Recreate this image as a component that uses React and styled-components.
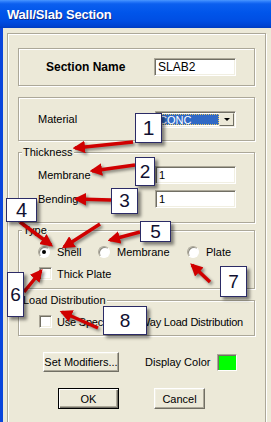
import React from "react";
import styled, { createGlobalStyle } from "styled-components";

const GlobalStyle = createGlobalStyle`
  *, *::before, *::after { box-sizing: border-box; }
  html, body { margin: 0; padding: 0; background: #ECE9D8; }
  body {
    font-family: "Liberation Sans", Arial, sans-serif;
    font-size: 11px;
    color: #000;
  }
`;

const Window = styled.div`
  position: relative;
  width: 271px;
  height: 422px;
  overflow: hidden;
  display: flex;
  flex-direction: column;
  background: #ECE9D8;
`;

const TitleBar = styled.div`
  flex: none;
  height: 28px;
  display: flex;
  align-items: center;
  padding: 1px 0 0 7px;
  color: #fff;
  font-weight: bold;
  font-size: 13px;
  letter-spacing: -0.2px;
  text-shadow: 1px 1px 0 #0b2a8e;
  background: linear-gradient(
    to bottom,
    #4a97ff 0%,
    #2a7bfa 6%,
    #0b5fef 14%,
    #0055ea 45%,
    #004ee3 75%,
    #0044d2 92%,
    #003cc0 100%
  );
`;

const Body = styled.div`
  flex: 1;
  border-left: 3px solid #0a45dc;
  padding: 5px 5px 0 4px;
`;

const etched = `
  border: 1px solid #aca899;
  box-shadow: inset 1px 1px 0 #fff, 1px 1px 0 #fff;
`;

const OuterFrame = styled.div`
  ${etched}
  height: 400px;
  padding: 14px 10px 0 10px;
  display: flex;
  flex-direction: column;
`;

const Panel = styled.div`
  ${etched}
  height: ${(p) => p.$h}px;
  margin-top: ${(p) => p.$mt || 0}px;
  display: flex;
  align-items: center;
`;

const GroupBox = styled.div`
  ${etched}
  height: ${(p) => p.$h}px;
  margin-top: ${(p) => p.$mt}px;
  display: flex;
  flex-direction: column;
`;

const Legend = styled.div`
  align-self: flex-start;
  margin: -7px 0 0 3px;
  padding: 0 1px;
  height: 13px;
  line-height: 13px;
  background: #ECE9D8;
`;

const Row = styled.div`
  display: flex;
  align-items: center;
  height: ${(p) => p.$h || 18}px;
  padding-left: ${(p) => p.$indent}px;
  margin-top: ${(p) => p.$mt || 0}px;
`;

const Label = styled.span`
  flex: none;
  width: ${(p) => p.$w}px;
  font-weight: ${(p) => (p.$bold ? "bold" : "normal")};
  font-size: ${(p) => (p.$bold ? 12 : 11)}px;
  white-space: nowrap;
`;

const sunken = `
  border-style: solid;
  border-width: 1px;
  border-color: #aca899 #fff #fff #aca899;
  box-shadow: inset 1px 1px 0 #716f64, inset -1px -1px 0 #f1efe2;
`;

const TextBox = styled.div`
  ${sunken}
  width: ${(p) => p.$w}px;
  height: 18px;
  background: #fff;
  padding: 0 3px;
  line-height: 16px;
  font-size: ${(p) => p.$fs || 11}px;
`;

const Select = styled.div`
  ${sunken}
  width: 81px;
  height: 17px;
  background: #fff;
  display: flex;
  padding: 2px;
`;

const SelectValue = styled.div`
  flex: 1;
  background: #316ac5;
  color: #fff;
  outline: 1px dotted #e8c860;
  outline-offset: -1px;
  line-height: 13px;
  padding-left: 1px;
`;

const DropButton = styled.div`
  width: 15px;
  margin: -1px -1px -1px 0;
  background: #ECE9D8;
  border-style: solid;
  border-width: 1px;
  border-color: #f1efe2 #716f64 #716f64 #f1efe2;
  display: flex;
  align-items: center;
  justify-content: center;
  &::after {
    content: "";
    border-left: 3px solid transparent;
    border-right: 3px solid transparent;
    border-top: 3px solid #000;
  }
`;

const Option = styled.label`
  display: flex;
  align-items: center;
  width: ${(p) => p.$w}px;
  gap: ${(p) => p.$gap || 7}px;
  white-space: nowrap;
  letter-spacing: ${(p) => p.$ls || 0}px;
`;

const Radio = styled.span`
  flex: none;
  width: 12px;
  height: 12px;
  border-radius: 50%;
  background: #fff;
  border: 1px solid;
  border-color: #aca899 #fff #fff #aca899;
  box-shadow: inset 1px 1px 0 #8d8b80;
  display: flex;
  align-items: center;
  justify-content: center;
  &::after {
    content: "";
    width: 4px;
    height: 4px;
    border-radius: 50%;
    background: ${(p) => (p.$checked ? "#000" : "transparent")};
  }
`;

const Check = styled.span`
  ${sunken}
  flex: none;
  width: 13px;
  height: 13px;
  background: #fff;
`;

const Button = styled.div`
  flex: none;
  width: ${(p) => p.$w}px;
  height: ${(p) => p.$h || 20}px;
  margin-left: ${(p) => p.$ml || 0}px;
  display: flex;
  align-items: center;
  justify-content: center;
  background: #ECE9D8;
  border: 1px solid;
  border-color: #fff #716f64 #716f64 #fff;
  box-shadow: inset -1px -1px 0 #aca899, inset 1px 1px 0 #f1efe2;
  ${(p) =>
    p.$default &&
    `
    border: 1px solid #000;
    box-shadow: inset 1px 1px 0 #fff, inset -1px -1px 0 #716f64, inset -2px -2px 0 #aca899;
  `}
`;

const ColorText = styled.span`
  flex: none;
  width: 72px;
  margin-left: 26px;
`;

const Swatch = styled.span`
  ${sunken}
  width: 20px;
  height: 17px;
  background: #00ff00;
  box-shadow: inset 1px 1px 0 #716f64;
`;

const Overlay = styled.svg`
  position: absolute;
  left: 0;
  top: 0;
  pointer-events: none;
  filter: drop-shadow(2px 2px 1.5px rgba(0, 0, 0, 0.45));
`;

const NumberTag = styled.div`
  position: absolute;
  left: ${(p) => p.$x}px;
  top: ${(p) => p.$y}px;
  width: ${(p) => p.$w}px;
  height: ${(p) => p.$h}px;
  background: #fff;
  border: 1px solid #2b2b66;
  box-shadow: 3px 3px 3px rgba(0, 0, 0, 0.45);
  display: flex;
  align-items: center;
  justify-content: center;
  font-family: "Liberation Sans", Arial, sans-serif;
  font-size: ${(p) => p.$fs || 19}px;
  color: #101030;
`;

const arrows = [
  [133, 142, 75, 148],
  [135, 165, 92, 171],
  [111, 200, 76, 199],
  [20, 222, 51, 245],
  [100, 224, 64, 247],
  [140, 232, 110, 240],
  [24, 292, 41, 271],
  [210, 282, 192, 265],
  [98, 328, 62, 312],
];

const tags = [
  { n: "1", x: 135, y: 113, w: 27, h: 30, fs: 21 },
  { n: "2", x: 135, y: 157, w: 20, h: 29 },
  { n: "3", x: 111, y: 188, w: 27, h: 26 },
  { n: "4", x: 6, y: 198, w: 31, h: 24, fs: 20 },
  { n: "5", x: 140, y: 221, w: 31, h: 21 },
  { n: "6", x: 7, y: 272, w: 17, h: 45 },
  { n: "7", x: 220, y: 266, w: 27, h: 31 },
  { n: "8", x: 103, y: 306, w: 44, h: 29 },
];

export default function App() {
  return (
    <>
      <GlobalStyle />
      <Window>
        <TitleBar>Wall/Slab Section</TitleBar>
        <Body>
          <OuterFrame>
            <Panel $h={38}>
              <Row $indent={27}>
                <Label $w={108} $bold>Section Name</Label>
                <TextBox $w={82} $fs={12}>SLAB2</TextBox>
              </Row>
            </Panel>

            <Panel $h={44} $mt={11}>
              <Row $indent={19}>
                <Label $w={117}>Material</Label>
                <Select>
                  <SelectValue>CONC</SelectValue>
                  <DropButton />
                </Select>
              </Row>
            </Panel>

            <GroupBox $h={71} $mt={11}>
              <Legend>Thickness</Legend>
              <Row $indent={19} $mt={7}>
                <Label $w={117}>Membrane</Label>
                <TextBox $w={81}>1</TextBox>
              </Row>
              <Row $indent={19} $mt={6}>
                <Label $w={117}>Bending</Label>
                <TextBox $w={81}>1</TextBox>
              </Row>
            </GroupBox>

            <GroupBox $h={59} $mt={7}>
              <Legend>Type</Legend>
              <Row $indent={19} $mt={8} $h={13}>
                <Option $w={60}>
                  <Radio $checked />
                  Shell
                </Option>
                <Option $w={89}>
                  <Radio />
                  Membrane
                </Option>
                <Option $w={60}>
                  <Radio />
                  Plate
                </Option>
              </Row>
              <Row $indent={20} $mt={9} $h={13}>
                <Option $w={120} $gap={5}>
                  <Check />
                  Thick Plate
                </Option>
              </Row>
            </GroupBox>

            <GroupBox $h={36} $mt={11}>
              <Legend>Load Distribution</Legend>
              <Row $indent={20} $mt={8} $h={13}>
                <Option $w={215} $gap={5} $ls={-0.2}>
                  <Check />
                  Use Special One-Way Load Distribution
                </Option>
              </Row>
            </GroupBox>

            <Row $indent={25} $mt={16} $h={20}>
              <Button $w={76}>Set Modifiers...</Button>
              <ColorText>Display Color</ColorText>
              <Swatch />
            </Row>

            <Row $indent={40} $mt={16} $h={21}>
              <Button $w={61} $h={21} $default>OK</Button>
              <Button $w={51} $h={21} $ml={35}>Cancel</Button>
            </Row>
          </OuterFrame>
        </Body>

        <Overlay width="271" height="422" viewBox="0 0 271 422">
          <defs>
            <marker
              id="head"
              viewBox="0 0 10 10"
              refX="8"
              refY="5"
              markerWidth="3.6"
              markerHeight="3.6"
              orient="auto"
            >
              <path d="M0,0 L10,5 L0,10 z" fill="#d00000" />
            </marker>
          </defs>
          {arrows.map(([x1, y1, x2, y2], i) => (
            <line
              key={i}
              x1={x1}
              y1={y1}
              x2={x2}
              y2={y2}
              stroke="#d00000"
              strokeWidth="3.5"
              markerEnd="url(#head)"
            />
          ))}
        </Overlay>

        {tags.map((t) => (
          <NumberTag key={t.n} $x={t.x} $y={t.y} $w={t.w} $h={t.h} $fs={t.fs}>
            {t.n}
          </NumberTag>
        ))}
      </Window>
    </>
  );
}
